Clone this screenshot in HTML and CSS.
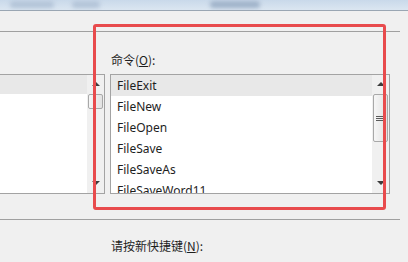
FILE: index.html
```html
<!DOCTYPE html>
<html lang="zh-CN">
<head>
    <meta charset="UTF-8">
    <title>自定义键盘</title>
    <link rel="stylesheet" href="styles.css">
</head>
<body>
    <div class="window">
        <div class="titlebar">
            <span class="blur b1"></span>
            <span class="blur b2"></span>
            <span class="blur b3"></span>
        </div>

        <div class="content">
            <div class="separator sep-top"></div>

            <div class="label label-cmd">命令(<u>O</u>):</div>

            <div class="lists">
                <div class="listbox listbox-left">
                    <div class="items">
                        <div class="item selected"></div>
                    </div>
                    <div class="scrollbar">
                        <div class="arrow"><span class="tri up"></span></div>
                        <div class="track"><div class="thumb small"></div></div>
                        <div class="arrow"><span class="tri down"></span></div>
                    </div>
                </div>

                <div class="listbox listbox-right">
                    <div class="items">
                        <div class="item selected">FileExit</div>
                        <div class="item">FileNew</div>
                        <div class="item">FileOpen</div>
                        <div class="item">FileSave</div>
                        <div class="item">FileSaveAs</div>
                        <div class="item">FileSaveWord11</div>
                    </div>
                    <div class="scrollbar">
                        <div class="arrow"><span class="tri up"></span></div>
                        <div class="track">
                            <div class="thumb big">
                                <span class="grip"></span>
                            </div>
                        </div>
                        <div class="arrow"><span class="tri down"></span></div>
                    </div>
                </div>
            </div>

            <div class="separator sep-bottom"></div>

            <div class="label label-key">请按新快捷键(<u>N</u>):</div>
        </div>

        <div class="callout"></div>
    </div>
</body>
</html>
```

FILE: styles.css
```css
* {
    box-sizing: border-box;
    margin: 0;
    padding: 0;
}

body {
    background: #f0f0f0;
    font-family: "Noto Sans CJK SC", "Noto Sans", sans-serif;
    color: #1e1e1e;
    overflow: hidden;
}

.window {
    position: relative;
    width: 408px;
    height: 262px;
}

/* blurred title bar strip */
.titlebar {
    position: relative;
    height: 11px;
    background: linear-gradient(to bottom, #c9d9ea, #dbe6f1);
    border-bottom: 1px solid #9aa6b3;
    overflow: hidden;
}

.blur {
    position: absolute;
    top: 1px;
    height: 7px;
    border-radius: 4px;
    background: #b3c4d8;
    filter: blur(2px);
}

.b1 { left: 10px; width: 44px; }
.b2 { left: 72px; width: 28px; }
.b3 { left: 210px; width: 50px; background: #9fb2c9; }

.separator {
    width: 400px;
    height: 1px;
    background: #a0a0a0;
}

.sep-top {
    margin-top: 20px;
}

.sep-bottom {
    margin-top: 25px;
}

.label {
    font-size: 12px;
    line-height: 16px;
    padding-left: 111px;
}

.label u {
    text-underline-offset: 1px;
}

.label-cmd {
    margin-top: 20px;
    margin-bottom: 6px;
}

.label-key {
    margin-top: 18px;
}

.lists {
    display: flex;
}

.listbox {
    display: flex;
    height: 120px;
    background: #fff;
    border: 1px solid #a3a3a3;
    overflow: hidden;
}

.listbox-left {
    width: 106px;
    margin-left: -1px;
}

.listbox-right {
    width: 280px;
    margin-left: 5px;
}

.items {
    flex: 1;
    overflow: hidden;
}

.item {
    height: 21px;
    line-height: 21px;
    padding-left: 6px;
    font-family: "Noto Sans", sans-serif;
    font-size: 12px;
    white-space: nowrap;
}

.listbox-left .item {
    height: 19px;
}

.item.selected {
    background: #e8e8e8;
}

.scrollbar {
    width: 17px;
    display: flex;
    flex-direction: column;
    background: #f0f0f0;
}

.arrow {
    height: 17px;
    display: flex;
    align-items: center;
    justify-content: center;
}

.tri {
    width: 0;
    height: 0;
    border-left: 4px solid transparent;
    border-right: 4px solid transparent;
}

.tri.up {
    border-bottom: 4px solid #3c3c3c;
    margin-top: 1px;
}

.tri.down {
    border-top: 4px solid #3c3c3c;
    margin-bottom: 3px;
}

.track {
    flex: 1;
    padding: 2px 1px 0 1px;
}

.thumb {
    display: flex;
    align-items: center;
    justify-content: center;
    border: 1px solid #a8a8a8;
    border-radius: 2px;
    background: linear-gradient(to right, #f6f6f6, #e2e2e2);
}

.thumb.small {
    height: 15px;
}

.thumb.big {
    height: 48px;
}

.grip {
    width: 7px;
    height: 5px;
    border-top: 1px solid #5a5a5a;
    border-bottom: 1px solid #5a5a5a;
    position: relative;
    margin-left: -2px;
}

.grip::after {
    content: "";
    position: absolute;
    left: 0;
    right: 0;
    top: 1px;
    height: 1px;
    background: #5a5a5a;
}

/* red annotation frame drawn over the dialog */
.callout {
    position: absolute;
    left: 93px;
    top: 24px;
    width: 293px;
    height: 186px;
    border: 3px solid #e84b4d;
    border-radius: 3px;
}
```
